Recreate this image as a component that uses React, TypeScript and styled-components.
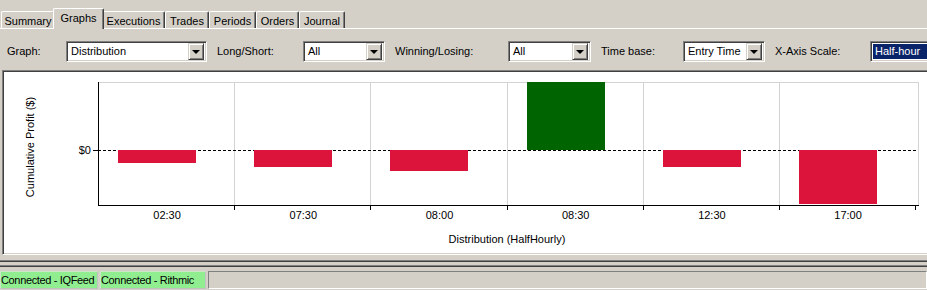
import React from 'react'
import styled, { createGlobalStyle, css } from 'styled-components'

const GlobalStyle = createGlobalStyle`
    html, body {
        margin:0;
        padding:0;
        background:#d4d0c8;
        overflow:hidden;
    }
    body {
        font-family:"Liberation Sans", Arial, sans-serif;
        font-size:11px;
        color:#000;
    }
`

const Window = styled.div`
    width:927px;
    height:290px;
    overflow:hidden;
    background:#d4d0c8;
    display:flex;
    flex-direction:column;
`

// tabs
const TabStrip = styled.div`
    height:28px;
    display:flex;
    align-items:flex-end;
    padding-left:1px;
    border-bottom:1px solid #fff;
    box-sizing:content-box;
`
const Tab = styled.div<{ $w: number; $active?: boolean }>`
    position:relative;
    box-sizing:border-box;
    width:${p => p.$w}px;
    height:17px;
    display:flex;
    align-items:center;
    justify-content:center;
    padding-top:1px;
    border-top:1px solid #fff;
    border-left:1px solid #fff;
    border-right:1px solid #404040;
    box-shadow:inset -1px 0 #808080;
    border-radius:2px 2px 0 0;
    white-space:nowrap;
    ${p => p.$active && css`
        width:${p.$w + 4}px;
        height:21px;
        margin:0 -2px -1px;
        padding:0 0 3px;
        z-index:1;
        background:#d4d0c8;
    `}
`

// toolbar
const Toolbar = styled.div`
    height:41px;
    box-sizing:border-box;
    padding:3px 0 0 7px;
    display:flex;
    align-items:center;
    gap:10px;
    white-space:nowrap;
`
const Field = styled.div`
    display:flex;
    align-items:center;
`
const Label = styled.span<{ $w: number }>`
    width:${p => p.$w}px;
`
const Combo = styled.div<{ $w: number }>`
    box-sizing:border-box;
    flex:none;
    width:${p => p.$w}px;
    height:21px;
    display:flex;
    align-items:center;
    background:#fff;
    border:1px solid;
    border-color:#808080 #fff #fff #808080;
    box-shadow:inset 1px 1px #404040, inset -1px -1px #d4d0c8;
    padding:2px;
`
const ComboText = styled.span<{ $selected?: boolean }>`
    flex:1;
    height:15px;
    line-height:15px;
    padding-left:2px;
    ${p => p.$selected && css`
        background:#0a246a;
        color:#fff;
    `}
`
const DropButton = styled.div`
    box-sizing:border-box;
    width:16px;
    height:17px;
    flex:none;
    display:flex;
    align-items:center;
    justify-content:center;
    background:#d4d0c8;
    border:1px solid;
    border-color:#d4d0c8 #404040 #404040 #d4d0c8;
    box-shadow:inset 1px 1px #fff, inset -1px -1px #808080;
    &::after {
        content:"";
        border-left:4px solid transparent;
        border-right:4px solid transparent;
        border-top:4px solid #000;
        margin-top:1px;
    }
`

// chart panel
const ChartPanel = styled.div`
    box-sizing:border-box;
    height:185px;
    margin-left:2px;
    margin-right:-4px;
    background:#fff;
    border:1px solid;
    border-color:#808080 #fff #fff #808080;
    box-shadow:inset 1px 1px #404040, inset -1px -1px #d4d0c8;
    padding:1px;
`
const Splitter = styled.div`
    height:16px;
    box-sizing:border-box;
    padding-top:5px;
`
const SplitLine = styled.div`
    height:7px;
    box-sizing:border-box;
    border-top:1px solid #808080;
    border-bottom:1px solid #404040;
    box-shadow:inset 0 1px #404040, inset 0 -1px #808080;
    background:#d4d0c8;
`

// status bar
const StatusBar = styled.div`
    height:18px;
    display:flex;
    gap:2px;
`
const StatusPanel = styled.div<{ $w?: number }>`
    box-sizing:border-box;
    height:18px;
    display:flex;
    align-items:center;
    overflow:hidden;
    white-space:nowrap;
    letter-spacing:-0.35px;
    border:1px solid;
    ${p => p.$w ? css`
        width:${p.$w}px;
        flex:none;
        background:#90ee90;
        border-color:#c8e8c8 #c0c0c0 #c0c0c0 #c8e8c8;
    ` : css`
        flex:1;
        border-color:#808080 #fff #fff #808080;
    `}
`

const tabs = [
    { name: 'Summary', w: 54 },
    { name: 'Graphs', w: 47, active: true },
    { name: 'Executions', w: 63 },
    { name: 'Trades', w: 44 },
    { name: 'Periods', w: 47 },
    { name: 'Orders', w: 43 },
    { name: 'Journal', w: 46 },
]

const fields = [
    { label: 'Graph:', lw: 59, value: 'Distribution', cw: 141 },
    { label: 'Long/Short:', lw: 86, value: 'All', cw: 82 },
    { label: 'Winning/Losing:', lw: 113, value: 'All', cw: 83 },
    { label: 'Time base:', lw: 82, value: 'Entry Time', cw: 82 },
    { label: 'X-Axis Scale:', lw: 95, value: 'Half-hour', cw: 120, selected: true },
]

const bars = [
    { label: '02:30', v: -13 },
    { label: '07:30', v: -17 },
    { label: '08:00', v: -21 },
    { label: '08:30', v: 68 },
    { label: '12:30', v: -17 },
    { label: '17:00', v: -54 },
]

const X0 = 99
const CAT = 136.2
const ZERO = 150
const TOP = 82
const BOTTOM = 205

const Chart = () => (
    <svg width={927} height={181} viewBox="4 72 927 181" style={{ display: 'block' }}
        fontFamily='"Liberation Sans", Arial, sans-serif' fontSize={11}>
        <line x1={98} y1={TOP + 0.5} x2={919} y2={TOP + 0.5} stroke="#d3d3d3" />
        <line x1={918.5} y1={TOP} x2={918.5} y2={BOTTOM} stroke="#d3d3d3" />
        {bars.map((_, i) => {
            const x = Math.round(X0 + CAT * (i + 1)) - 0.5
            return (
                <g key={i}>
                    {i < 5 && <line x1={x} y1={TOP} x2={x} y2={BOTTOM} stroke="#d3d3d3" />}
                    <line x1={x} y1={BOTTOM} x2={x} y2={BOTTOM + 5} stroke="#000" />
                </g>
            )
        })}
        <line x1={98} y1={ZERO + 0.5} x2={918} y2={ZERO + 0.5} stroke="#000" strokeDasharray="3 2" />
        {bars.map((b, i) => {
            const x = Math.round(X0 + CAT * i + 19)
            const y = b.v > 0 ? ZERO - b.v : ZERO
            return (
                <rect key={b.label} x={x} y={y} width={78} height={Math.abs(b.v)}
                    fill={b.v > 0 ? '#006400' : '#dc143c'} />
            )
        })}
        <line x1={98.5} y1={TOP} x2={98.5} y2={BOTTOM + 1} stroke="#000" />
        <line x1={98} y1={BOTTOM + 0.5} x2={919} y2={BOTTOM + 0.5} stroke="#000" />
        <line x1={93} y1={ZERO + 0.5} x2={98} y2={ZERO + 0.5} stroke="#000" />
        <text x={91} y={154} textAnchor="end">$0</text>
        {bars.map((b, i) => (
            <text key={b.label} x={X0 + CAT * i + CAT / 2} y={219} textAnchor="middle">{b.label}</text>
        ))}
        <text x={507} y={243} textAnchor="middle">Distribution (HalfHourly)</text>
        <text x={0} y={0} textAnchor="middle" transform="translate(34 147) rotate(-90)">Cumulative Profit ($)</text>
    </svg>
)

const App = () => {
    return (
        <>
            <GlobalStyle />
            <Window>
                <TabStrip>
                    {tabs.map(t => (
                        <Tab key={t.name} $w={t.w} $active={t.active}>{t.name}</Tab>
                    ))}
                </TabStrip>
                <Toolbar>
                    {fields.map(f => (
                        <Field key={f.label}>
                            <Label $w={f.lw}>{f.label}</Label>
                            <Combo $w={f.cw}>
                                <ComboText $selected={f.selected}>{f.value}</ComboText>
                                <DropButton />
                            </Combo>
                        </Field>
                    ))}
                </Toolbar>
                <ChartPanel>
                    <Chart />
                </ChartPanel>
                <Splitter>
                    <SplitLine />
                </Splitter>
                <StatusBar>
                    <StatusPanel $w={98}>Connected - IQFeed</StatusPanel>
                    <StatusPanel $w={106}>Connected - Rithmic</StatusPanel>
                    <StatusPanel />
                </StatusBar>
            </Window>
        </>
    )
}

export default App
